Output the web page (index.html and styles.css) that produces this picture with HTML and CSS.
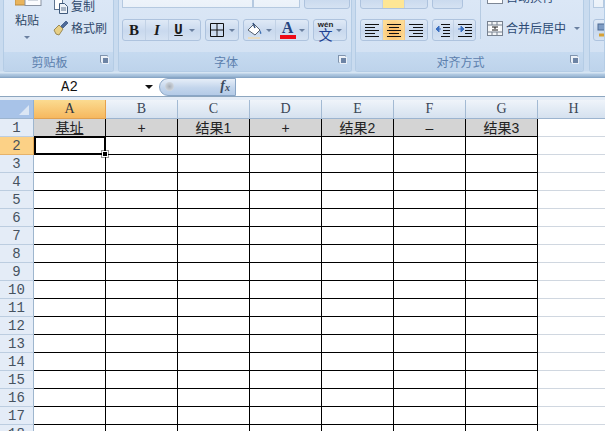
FILE: index.html
```html
<!DOCTYPE html>
<html lang="zh">
<head>
<meta charset="utf-8">
<title>Excel</title>
<link rel="stylesheet" href="styles.css">
</head>
<body>
<div class="ribbon">
  <section class="group g-clip">
    <div class="body body-clip">
      <div class="paste">
        <svg class="paste-icon" width="27" height="24" viewBox="0 0 27 24"><rect x="0" y="0" width="14" height="23" fill="#e9b45c" stroke="#b98a3e"/><rect x="10" y="4" width="16" height="19.500" fill="#fbfcfe" stroke="#8a94a3"/><path d="M13 9h10M13 12h10M13 15h10M13 18h10" stroke="#a9b3c2"/></svg>
        <span class="rtext">粘贴</span>
        <i class="caret paste-caret"></i>
      </div>
      <div class="clip-list">
        <div class="clip-row"><svg width="16" height="16" viewBox="0 0 16 16"><rect x="1.500" y="1.500" width="8" height="10" fill="#fff" stroke="#5f7590"/><path d="M6.500 5.500h5l3 3v7h-8z" fill="#eef3f9" stroke="#3f5a7c"/><path d="M8 10h5M8 12h5" stroke="#5f7590"/></svg><span class="rtext">复制</span></div>
        <div class="clip-row"><svg width="16" height="16" viewBox="0 0 16 16"><path d="M1 10l5-5 4 4-4 6-3-1z" fill="#e7cf85" stroke="#9b8a55"/><path d="M8 6l5-5 2 2-5 5z" fill="#4d6a99" stroke="#2f4a78" stroke-width=".7"/></svg><span class="rtext">格式刷</span></div>
      </div>
    </div>
    <footer class="label">剪贴板<i class="launcher"></i></footer>
  </section>

  <section class="group g-font">
    <div class="body body-stack">
      <div class="row">
        <div class="input input-name"></div>
        <div class="input input-size"></div>
        <div class="btns btns-top"></div>
      </div>
      <div class="row">
        <div class="btns">
          <span class="btn b-bold">B</span>
          <span class="btn b-ital">I</span>
          <span class="btn b-und"><u>U</u><i class="caret"></i></span>
        </div>
        <div class="btns">
          <span class="btn b-wide b-border"><svg width="14" height="14" viewBox="0 0 14 14"><path d="M.5.5h13v13H.5zM7 0v14M0 7h14" fill="none" stroke="#111"/></svg><i class="caret"></i></span>
        </div>
        <div class="btns">
          <span class="btn b-wide"><svg width="16" height="17" viewBox="0 0 16 17"><path d="M1 8l6-6 6 6-5 5z" fill="#fff" stroke="#56606e"/><path d="M6 1l2 5" stroke="#33507c" stroke-width="1.500"/><path d="M13 8q2 3 1 4-2 0-1-4" fill="#3e6fb0"/><rect x="1" y="15" width="12" height="2" fill="#e9dcc0"/></svg><i class="caret"></i></span>
          <span class="btn b-wide"><span class="letter-a">A<b class="redbar"></b></span><i class="caret"></i></span>
        </div>
        <div class="btns">
          <span class="btn b-wen"><span class="wen"><small>wén</small><span>文</span></span><i class="caret"></i></span>
        </div>
      </div>
    </div>
    <footer class="label">字体<i class="launcher"></i></footer>
  </section>

  <section class="group g-align">
    <div class="body body-align">
      <div class="align-left">
        <div class="row">
          <div class="btns btns-a"><span class="btn"></span><span class="btn on-top"></span><span class="btn"></span></div>
          <div class="btns btns-i btns-i-top"></div>
        </div>
        <div class="row">
          <div class="btns btns-a">
            <span class="btn"><svg width="16" height="14" viewBox="0 0 16 14"><path d="M1 1.500h14M1 4.500h10M1 7.500h14M1 10.500h10M1 13.500h14" stroke="#111"/></svg></span>
            <span class="btn on"><svg width="16" height="14" viewBox="0 0 16 14"><path d="M1 1.500h14M3 4.500h10M1 7.500h14M3 10.500h10M1 13.500h14" stroke="#111"/></svg></span>
            <span class="btn"><svg width="16" height="14" viewBox="0 0 16 14"><path d="M1 1.500h14M5 4.500h10M1 7.500h14M5 10.500h10M1 13.500h14" stroke="#111"/></svg></span>
          </div>
          <div class="btns btns-i">
            <span class="btn"><svg width="16" height="14" viewBox="0 0 16 14"><path d="M6 1.500h9M8 4.500h7M8 7.500h7M8 10.500h7M6 13.500h9" stroke="#111"/><path d="M1 6h5M1 6l3-3v6z" fill="#3a6fc0" stroke="#3a6fc0"/></svg></span>
            <span class="btn"><svg width="16" height="14" viewBox="0 0 16 14"><path d="M1 1.500h14M8 4.500h7M8 7.500h7M8 10.500h7M1 13.500h14" stroke="#111"/><path d="M1 6h5M7 6l-3-3v6z" fill="#3a6fc0" stroke="#3a6fc0"/></svg></span>
          </div>
        </div>
      </div>
      <div class="align-right">
        <div class="merge-row wrap-row"><svg width="16" height="14" viewBox="0 0 16 14"><rect x=".5" y=".5" width="15" height="13" fill="#fff" stroke="#7d8795"/></svg><span class="rtext">自动换行</span></div>
        <div class="merge-row"><svg width="16" height="15" viewBox="0 0 16 15"><rect x=".5" y=".5" width="15" height="14" fill="#f4f6f8" stroke="#77818f"/><path d="M0 4h16M0 11h16M5 0v4M10 0v4M5 11v4M10 11v4" stroke="#77818f"/><rect x="3" y="5" width="10" height="5" fill="#fff"/><path d="M5 6h6M5 9h6M7 7h2" stroke="#1c1c1c"/></svg><span class="rtext">合并后居中</span><i class="caret merge-caret"></i></div>
      </div>
    </div>
    <footer class="label">对齐方式<i class="launcher"></i></footer>
  </section>

  <section class="group g-next">
    <div class="body body-stack">
      <div class="row"><div class="input input-next"></div></div>
      <div class="row"><div class="btns btns-next"><svg width="13" height="15" viewBox="0 0 13 15"><rect x="1" y="1" width="12" height="6" fill="#7f9cc4" stroke="#4d6a94"/><path d="M2 12h11" stroke="#d7a236" stroke-width="3"/></svg></div></div>
    </div>
    <footer class="label"></footer>
  </section>
</div>

<div class="formula">
  <div class="namebox"><span>A2</span><i class="name-caret"></i></div>
  <div class="pill"><i class="knob"></i><em class="fx">f<sub>x</sub></em></div>
  <div class="finput"></div>
</div>

<div class="spacer"></div>

<div class="sheet">
<table>
  <thead>
    <tr><th class="corner"><i></i></th><th class="col active">A</th><th class="col">B</th><th class="col">C</th><th class="col">D</th><th class="col">E</th><th class="col">F</th><th class="col">G</th><th class="col">H</th></tr>
  </thead>
  <tbody>
    <tr class="title"><th>1</th><td class="u">基址</td><td>+</td><td>结果1</td><td>+</td><td>结果2</td><td>–</td><td>结果3</td><td></td></tr>
    <tr><th class="active">2</th><td class="cur"><div class="sel"><i></i></div></td><td></td><td></td><td></td><td></td><td></td><td></td><td></td></tr>
    <tr><th>3</th><td></td><td></td><td></td><td></td><td></td><td></td><td></td><td></td></tr>
    <tr><th>4</th><td></td><td></td><td></td><td></td><td></td><td></td><td></td><td></td></tr>
    <tr><th>5</th><td></td><td></td><td></td><td></td><td></td><td></td><td></td><td></td></tr>
    <tr><th>6</th><td></td><td></td><td></td><td></td><td></td><td></td><td></td><td></td></tr>
    <tr><th>7</th><td></td><td></td><td></td><td></td><td></td><td></td><td></td><td></td></tr>
    <tr><th>8</th><td></td><td></td><td></td><td></td><td></td><td></td><td></td><td></td></tr>
    <tr><th>9</th><td></td><td></td><td></td><td></td><td></td><td></td><td></td><td></td></tr>
    <tr><th>10</th><td></td><td></td><td></td><td></td><td></td><td></td><td></td><td></td></tr>
    <tr><th>11</th><td></td><td></td><td></td><td></td><td></td><td></td><td></td><td></td></tr>
    <tr><th>12</th><td></td><td></td><td></td><td></td><td></td><td></td><td></td><td></td></tr>
    <tr><th>13</th><td></td><td></td><td></td><td></td><td></td><td></td><td></td><td></td></tr>
    <tr><th>14</th><td></td><td></td><td></td><td></td><td></td><td></td><td></td><td></td></tr>
    <tr><th>15</th><td></td><td></td><td></td><td></td><td></td><td></td><td></td><td></td></tr>
    <tr><th>16</th><td></td><td></td><td></td><td></td><td></td><td></td><td></td><td></td></tr>
    <tr><th>17</th><td></td><td></td><td></td><td></td><td></td><td></td><td></td><td></td></tr>
    <tr><th>18</th><td></td><td></td><td></td><td></td><td></td><td></td><td></td><td></td></tr>
  </tbody>
</table>
</div>
</body>
</html>
```
FILE: styles.css
```css
* { box-sizing: border-box; }
html, body { margin: 0; padding: 0; width: 605px; height: 431px; overflow: hidden; background: #fff; }
body { font-family: "Liberation Sans", "Noto Sans CJK SC", sans-serif; font-size: 12px; }
i, em { font-style: normal; }

.ribbon {
  display: flex;
  height: 78px;
  padding: 0 0 0 3px;
  gap: 4px;
  overflow: hidden;
  background: linear-gradient(#c9dbef 0, #c9dbef 71px, #d6e5f3 72px, #d6e5f3 73px, #b3cbe3 74px, #a2bdd8 76px, #7f9fc0 78px);
}
.group {
  height: 72px;
  display: flex;
  flex-direction: column;
  border: 1px solid #b4cce5;
  border-top: 0;
  border-radius: 0 0 3px 3px;
  overflow: hidden;
  background: linear-gradient(#dbe7f6, #d1e0f2);
}
.g-clip { width: 111px; }
.g-font { width: 234px; margin-right: -1px; }
.g-align { width: 229px; }
.g-next { flex: 1; margin-left: 1px; }
.body { height: 52px; flex: none; overflow: hidden; display: flex; }
.label {
  flex: 1;
  position: relative;
  font-family: "Noto Sans CJK SC", sans-serif;
  font-size: 12px;
  line-height: 19px;
  text-align: center;
  padding-right: 18px;
  color: #5c80ad;
  background: linear-gradient(#c6daf0, #bdd3eb);
}
.launcher {
  position: absolute;
  right: 5px;
  top: 3px;
  width: 8px;
  height: 8px;
  border: 1px solid #7f93ad;
  background: #eef3f9;
  border-right-color: #b9c6d6;
  border-bottom-color: #b9c6d6;
}
.launcher::after {
  content: "";
  position: absolute;
  right: -2px;
  bottom: -2px;
  width: 5px;
  height: 5px;
  background: #6d84a5;
  border: 1px solid #e9eff7;
}
.rtext { font-family: "Noto Sans CJK SC", sans-serif; font-size: 12px; line-height: 14px; color: #2f4564; white-space: nowrap; }
.caret {
  display: inline-block;
  width: 0;
  height: 0;
  flex: none;
  border: 3px solid transparent;
  border-bottom: 0;
  border-top: 3px solid #6a80a0;
}

/* clipboard */
.body-clip { align-items: flex-end; padding: 0 0 13px 7px; gap: 5px; }
.paste { display: flex; flex-direction: column; align-items: center; width: 32px; flex: none; }
.paste-icon { margin-bottom: 7px; flex: none; margin-left: 2px; }
.paste-caret { margin-top: 9px; }
.clip-list { display: flex; flex-direction: column; }
.clip-row { display: flex; align-items: center; height: 22px; gap: 2px; margin-left: 5px; }
.clip-row .rtext { color: #30496c; }

/* shared rows */
.body-stack { flex-direction: column; justify-content: flex-end; padding: 0 0 12px 3px; gap: 11px; }
.row { display: flex; height: 21px; flex: none; gap: 4px; }
.input { height: 21px; background: linear-gradient(#f3f7fc, #eaf1f9); border: 1px solid #b5c9e0; }
.input-name { width: 131px; margin-right: -4px; }
.input-size { width: 47px; }
.input-next { width: 20px; }
.btns {
  display: flex;
  height: 22px;
  border: 1px solid #aec3de;
  border-radius: 3px;
  background: linear-gradient(#dfe9f6, #c9d9ee 55%, #d5e2f2);
}
.btn {
  display: flex;
  align-items: center;
  justify-content: center;
  width: 23px;
  height: 100%;
  gap: 5px;
  border-right: 1px solid #c2d2e6;
  color: #1a1a1a;
}
.btn:last-child { border-right: 0; }
.b-bold { font: bold 15px "Liberation Serif", serif; }
.b-ital { font: italic bold 15px "Liberation Serif", serif; }
.b-und { font: bold 14px "Liberation Mono", monospace; width: 31px; gap: 6px; }
.b-wide { width: 32px; gap: 3px; }
.b-border { gap: 5px; }
.letter-a {
  display: flex;
  flex-direction: column;
  align-items: center;
  font: bold 16px/14px "Liberation Serif", serif;
  color: #24447f;
}
.redbar { display: block; width: 16px; height: 4px; background: #ee0a16; }
.b-wen { width: 32px; gap: 3px; }
.wen { display: flex; flex-direction: column; align-items: center; font-family: "Noto Sans CJK SC", sans-serif; color: #1e3f92; font-size: 14px; }
.wen small { font: bold 8px/7px "Liberation Sans", sans-serif; color: #222; }
.wen span { line-height: 12px; }
.btns-top { width: 46px; }
.btns-next { width: 20px; align-items: center; padding-left: 3px; }

/* alignment */
.body-align { padding: 0 0 12px 4px; align-items: flex-end; }
.align-left { display: flex; flex-direction: column; gap: 11px; flex: none; }
.btns-a { width: 68px; }
.btns-a .btn { width: 22px; }
.btns-i { width: 44px; }
.btns-i-top { width: 31px; }
.btns-i .btn { width: 21px; }
.on { background: radial-gradient(ellipse at 50% 60%, #fbb45d, #fddb94 75%); border-color: #f2c98a; }
.on-top { background: #fee695; }
.align-right {
  display: flex;
  flex-direction: column;
  flex: none;
  margin-left: 4px;
  margin-bottom: 1px;
  padding-left: 6px;
  border-left: 1px solid #b6cbe2;
  height: 39px;
  justify-content: flex-end;
}
.merge-row { display: flex; align-items: center; height: 22px; gap: 3px; flex: none; }
.wrap-row { margin-bottom: 9px; }
.merge-row .rtext { font-size: 12px; color: #2c4a74; }
.merge-caret { margin-left: 5px; }

/* formula bar */
.formula {
  display: flex;
  height: 19px;
  border-bottom: 1px solid #8da6bf;
  background: #fff;
}
.namebox {
  width: 159px;
  display: flex;
  align-items: center;
  position: relative;
  justify-content: center;
  font: 14px "Liberation Mono", monospace;
  color: #111;
  padding-right: 20px;
}
.name-caret {
  position: absolute;
  right: 6px;
  top: 7px;
  width: 0;
  height: 0;
  border: 4px solid transparent;
  border-bottom: 0;
  border-top: 4px solid #111;
}
.pill {
  width: 77px;
  height: 18px;
  flex: none;
  position: relative;
  border: 1px solid #8aa6c6;
  border-radius: 9px 0 0 9px;
  background: linear-gradient(#e6eef8, #c3d5ec 55%, #b4cbe7);
}
.knob {
  position: absolute;
  left: 5px;
  top: 3px;
  width: 9px;
  height: 9px;
  border-radius: 50%;
  background: radial-gradient(circle, #a8aeb6, #dfe6ee);
}
.fx {
  position: absolute;
  right: 5px;
  top: -1px;
  font: italic bold 14px "Liberation Serif", serif;
  color: #3b4a5e;
}
.fx sub { font-size: 10px; vertical-align: -1px; }
.finput { flex: 1; }

.spacer { height: 3px; background: #e4ecf6; }

/* sheet */
.sheet { height: 331px; overflow: hidden; }
table { border-collapse: separate; border-spacing: 0; table-layout: fixed; width: 538px; }
tr { height: 18px; }
thead tr { height: 19px; }
th, td { padding: 0; box-sizing: border-box; text-align: center; overflow: hidden; white-space: nowrap; }
thead th {
  width: 72px;
  height: 19px;
  font: 14px/16px "Liberation Serif", serif;
  color: #3a4656;
  background: linear-gradient(#eff4fa, #d5e1ef);
  border-right: 1px solid #a3bad3;
  border-bottom: 1px solid #9cb4cf;
}
thead th.corner { width: 34px; position: relative; background: #a8c3e8; border-right: 1px solid #8fb0d4; }
.corner i {
  position: absolute;
  right: 4px;
  bottom: 3px;
  width: 0;
  height: 0;
  border-style: solid;
  border-width: 0 0 10px 10px;
  border-color: transparent transparent #dbe6f4 transparent;
}
thead th.active { background: linear-gradient(#fbdb90, #f6b85f); border-right-color: #e6a14d; border-bottom-color: #e0a050; color: #2f3540; }
tbody th {
  height: 18px;
  padding-top: 1px;
  font: 14px/16px "Liberation Mono", monospace;
  color: #46525f;
  background: #e4ecf7;
  border-right: 1px solid #9eb6ce;
  border-bottom: 1px solid #bccde0;
}
tbody th.active { background: #fcd186; border-right-color: #e2a653; border-bottom-color: #e5b26a; }
td {
  height: 18px;
  border-right: 1px solid #000;
  border-bottom: 1px solid #000;
  font: 14px/16px "Liberation Sans", "Noto Sans CJK SC", sans-serif;
  color: #222;
}
td:last-child { border-right: 1px solid #dfe3e8; border-bottom: 1px solid #d0d7e0; }
.title td { background: #d4d4d4; }
.title td:last-child { background: #fff; }
.u { text-decoration: underline; }
.cur { position: relative; overflow: visible; }
.sel {
  position: absolute;
  left: 0;
  top: -1px;
  width: 72px;
  height: 19px;
  border: 2px solid #000;
}
.sel i {
  position: absolute;
  right: -4px;
  bottom: -4px;
  width: 6px;
  height: 6px;
  background: #000;
  border: 1px solid #fff;
  outline: 1px solid rgba(0,0,0,.4);
}
```
